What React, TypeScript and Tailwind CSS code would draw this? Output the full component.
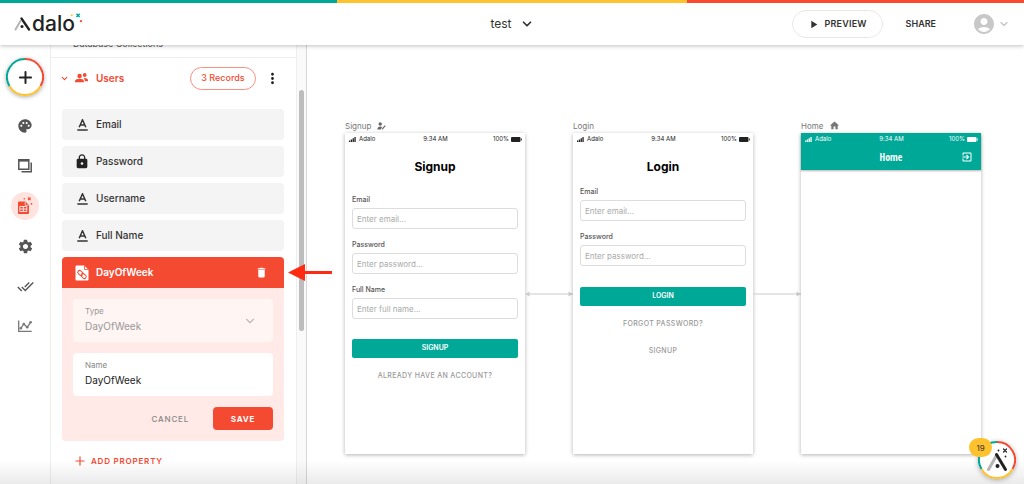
import { useState } from 'react';
import type { ReactNode } from 'react';
import { ChevronDown, Plus } from 'lucide-react';
import {
  MdAccountCircle,
  MdDelete,
  MdDoneAll,
  MdExitToApp,
  MdHome,
  MdLock,
  MdMoreVert,
  MdPalette,
  MdPlayArrow,
  MdSettings,
} from 'react-icons/md';

interface Property { name: string; icon: 'text' | 'lock' }
interface Field { id: string; label: string; placeholder: string; type: string }

const properties: Property[] = [
  { name: 'Email', icon: 'text' },
  { name: 'Password', icon: 'lock' },
  { name: 'Username', icon: 'text' },
  { name: 'Full Name', icon: 'text' },
];

const signupFields: Field[] = [
  { id: 'signup-email', label: 'Email', placeholder: 'Enter email...', type: 'email' },
  { id: 'signup-password', label: 'Password', placeholder: 'Enter password...', type: 'password' },
  { id: 'signup-name', label: 'Full Name', placeholder: 'Enter full name...', type: 'text' },
];

const loginFields: Field[] = [
  { id: 'login-email', label: 'Email', placeholder: 'Enter email...', type: 'email' },
  { id: 'login-password', label: 'Password', placeholder: 'Enter password...', type: 'password' },
];

function Logo() {
  return (
    <a href="#" aria-label="Adalo" className="relative flex w-fit items-end text-[#222]">
      <svg width="18" height="14" viewBox="0 0 18 14" fill="none" strokeLinecap="round">
        <path d="M1.5 12.500 6.500 4" stroke="#b5b5b5" strokeWidth="2" />
        <path d="M7.500 1.500 15 12.500" stroke="#222" strokeWidth="2.300" />
        <circle cx="8" cy="9.500" r="1.500" fill="#222" />
      </svg>
      <span className="text-[21px] leading-[14px] font-medium">dalo</span>
      <svg className="absolute -top-1 left-14" width="13" height="11" viewBox="0 0 13 11">
        <path d="m6.500.8 3.200 3.200m0-3.200L6.500 4" stroke="#00a898" strokeWidth="1.500" />
        <circle cx="1.800" cy="2.200" r="1" fill="#ffc22f" />
        <circle cx="11" cy="8.200" r="1.100" fill="#f44a32" />
      </svg>
    </a>
  );
}

function ColorRing({ size }: { size: number }) {
  return (
    <svg className="absolute inset-0" width={size} height={size} viewBox="0 0 38 38" fill="none" strokeWidth="2">
      <path d="M19 1A18 18 0 0 1 34.6 28" stroke="#f44a32" />
      <path d="M34.6 28A18 18 0 0 1 3.4 28" stroke="#ffc22f" />
      <path d="M3.4 28A18 18 0 0 1 19 1" stroke="#00a898" />
    </svg>
  );
}

function ScreensIcon() {
  return (
    <svg width="16" height="16" viewBox="0 0 16 16" fill="none" stroke="#555" strokeWidth="1.5">
      <path d="M1.8 1.8h10v9.4h-10z" />
      <path d="M1.8 2.6h10" strokeWidth="2" />
      <path d="M14.2 4.5v9.3H4.5" />
    </svg>
  );
}

function DatabaseIcon() {
  return (
    <svg width="18" height="20" viewBox="0 0 18 20">
      <path d="M3 5.500h6.500l3.500 3.800V17a1 1 0 0 1-1 1H3a1 1 0 0 1-1-1V6.500a1 1 0 0 1 1-1z" fill="#f44a32" />
      <path d="M3.800 10.500h7v5h-7zM3.800 13h7M7.300 10.500v5" fill="none" stroke="#ffe3df" strokeWidth="1" />
      <path d="M9.200 6v3.300h3.300" fill="none" stroke="#ffe3df" strokeWidth=".8" />
      <path d="m12 1.500 2.600 2.600m0-2.600L12 4.100" stroke="#f44a32" strokeWidth="1.100" />
      <circle cx="8.300" cy="2.800" r=".8" fill="#f44a32" />
      <circle cx="15.500" cy="7.800" r=".9" fill="#f44a32" />
    </svg>
  );
}

function AnalyticsIcon() {
  return (
    <svg width="16" height="14" viewBox="0 0 16 14" fill="none" stroke="#777" strokeWidth="1.300">
      <path d="M1.700 1.500v10.800h13" />
      <path d="m3.800 9.300 3-4.300 3.400 3.200 3.600-5" />
      <g fill="#777" stroke="none">
        <circle cx="3.800" cy="9.300" r="1.300" />
        <circle cx="6.800" cy="5" r="1.300" />
        <circle cx="10.200" cy="8.200" r="1.300" />
        <circle cx="13.600" cy="3.200" r="1.300" />
      </g>
    </svg>
  );
}

function PeopleIcon() {
  return (
    <svg className="mr-2 ml-[6px]" width="13" height="10" viewBox="0 0 13 10" fill="currentColor">
      <circle cx="4.600" cy="3" r="2.200" />
      <path d="M0 9.300V8.200c0-1.600 2.500-2.400 4.600-2.400s4.200.8 4.200 2.400v1.100z" />
      <circle cx="9.700" cy="2" r="1.900" />
      <path d="M8.600 5c2-.3 4.400.5 4.400 2v1.300H9.800c.1-1.400-.4-2.500-1.200-3.300z" />
    </svg>
  );
}

function TextIcon() {
  return (
    <svg width="11" height="12" viewBox="0 0 11 12" fill="none" stroke="#333">
      <path d="M2.200 8.300 5.500.8l3.300 7.500M3.300 6h4.400" strokeWidth="1.500" />
      <path d="M.3 11h10.400" strokeWidth="1.500" />
    </svg>
  );
}

function RelationIcon() {
  return (
    <svg width="14" height="16" viewBox="0 0 14 16">
      <path d="M1.500.5h7.700L13.500 4.800v9.700a1 1 0 0 1-1 1h-11a1 1 0 0 1-1-1v-13a1 1 0 0 1 1-1z" fill="#fff" />
      <path d="M9.500 1v3.500H13" fill="none" stroke="#f44a32" strokeWidth=".8" />
      <g fill="none" stroke="#f44a32" strokeWidth="1" transform="rotate(42 7 9.500)">
        <rect x="1.900" y="7.700" width="5.800" height="3.600" rx="1.800" />
        <rect x="6.300" y="7.700" width="5.800" height="3.600" rx="1.800" />
      </g>
    </svg>
  );
}

function Header() {
  return (
    <header className="relative z-20 shrink-0 bg-white shadow-[0_1px_4px_rgba(0,0,0,0.25)]">
      <div className="grid h-[3px] grid-cols-[337fr_350fr_337fr]">
        <div className="bg-[#00a898]" />
        <div className="bg-[#ffc22f]" />
        <div className="bg-[#f9492f]" />
      </div>
      <div className="grid h-[42px] grid-cols-3 items-center px-[14px]">
        <Logo />
        <button className="flex items-center gap-2 justify-self-center text-xs text-[#333]">
          test
          <ChevronDown size={14} strokeWidth={3} />
        </button>
        <div className="flex items-center justify-end">
          <button className="flex h-7 w-[91px] items-center justify-center gap-1 rounded-full border border-[#e8e8e8] text-[9px] font-semibold tracking-wide text-[#333]">
            <MdPlayArrow size={13} />
            PREVIEW
          </button>
          <button className="ml-[23px] text-[9px] font-semibold text-[#333]">SHARE</button>
          <button aria-label="Account" className="ml-9 flex items-center gap-[2px] text-[#c8c8c8]">
            <MdAccountCircle size={24} />
            <ChevronDown size={12} strokeWidth={3} />
          </button>
        </div>
      </div>
    </header>
  );
}

function RailButton({ label, active, children }: { label: string; active?: boolean; children: ReactNode }) {
  return (
    <button aria-label={label} className="flex size-10 items-center justify-center text-[#555]">
      <span className={active ? 'flex size-7 items-center justify-center rounded-full bg-[#ffe3df]' : 'flex size-7 items-center justify-center'}>
        {children}
      </span>
    </button>
  );
}

function Rail() {
  return (
    <nav className="flex w-[50px] shrink-0 flex-col items-center pt-[13px]">
      <button aria-label="Add" className="relative mb-[10px] flex size-[38px] items-center justify-center rounded-full bg-white text-[#222] shadow-[0_1px_4px_rgba(0,0,0,0.35)]">
        <ColorRing size={38} />
        <Plus size={19} strokeWidth={2.5} />
      </button>
      <RailButton label="Branding"><MdPalette size={16} /></RailButton>
      <RailButton label="Screens"><ScreensIcon /></RailButton>
      <RailButton label="Database" active><DatabaseIcon /></RailButton>
      <RailButton label="Settings"><MdSettings size={17} /></RailButton>
      <RailButton label="Publish"><MdDoneAll size={17} /></RailButton>
      <RailButton label="Analytics"><AnalyticsIcon /></RailButton>
    </nav>
  );
}

function PropertyEditor() {
  const [name, setName] = useState('DayOfWeek');

  return (
    <section className="overflow-hidden rounded-[4px] bg-[#ffeae7]">
      <div className="flex h-[31px] items-center bg-[#f44a32] pr-4 pl-[13px] text-white">
        <RelationIcon />
        <h3 className="ml-[7px] flex-1 text-[10px] font-semibold">DayOfWeek</h3>
        <button aria-label="Delete property"><MdDelete size={13} /></button>
      </div>
      <div className="flex flex-col gap-[11px] p-[11px]">
        <div className="relative flex h-[43px] flex-col rounded-[4px] bg-[#fff5f3] px-3 pt-[6px]">
          <label htmlFor="prop-type" className="text-[8px] leading-3 text-[#999]">Type</label>
          <select id="prop-type" disabled className="h-[18px] appearance-none bg-transparent text-[10px] text-[#999] opacity-100">
            <option>DayOfWeek</option>
          </select>
          <ChevronDown size={14} className="absolute top-[15px] right-4 text-[#bbb]" />
        </div>
        <div className="flex h-[43px] flex-col rounded-[4px] bg-white px-3 pt-[6px]">
          <label htmlFor="prop-name" className="text-[8px] leading-3 text-[#888]">Name</label>
          <input id="prop-name" value={name} onChange={(e) => setName(e.target.value)} className="h-[18px] w-full text-[10px] text-[#222] outline-none" />
        </div>
        <div className="flex justify-end gap-1 text-[8px] tracking-widest">
          <button className="h-[23px] px-5 font-medium text-[#888]">CANCEL</button>
          <button className="h-[23px] w-[60px] rounded-[4px] bg-[#f44a32] font-bold text-white">SAVE</button>
        </div>
      </div>
    </section>
  );
}

function DatabasePanel() {
  return (
    <aside className="flex w-[257px] shrink-0 overflow-hidden border-r border-[#d8d8d8]">
      <div className="min-w-0 flex-1 border-x border-[#eee]">
        <h2 className="-mt-[7px] pb-[7px] pl-[22px] text-[9px] leading-3 text-[#555]">Database Collections</h2>
        <div className="flex h-[41px] items-center border-t border-[#eee] pr-[15px] pl-[9px] text-[#f44a32]">
          <button className="flex flex-1 items-center text-[10px] font-semibold">
            <ChevronDown size={9} strokeWidth={3} />
            <PeopleIcon />
            Users
          </button>
          <button className="h-[23px] w-[66px] rounded-full border border-[#f8907f] text-[9px] font-medium">3 Records</button>
          <button aria-label="More" className="ml-2 text-[#222]"><MdMoreVert size={17} /></button>
        </div>
        <div className="mt-[11px] flex flex-col gap-[6px] pr-3 pl-[11px]">
          {properties.map((p) => (
            <button key={p.name} className="flex h-[31px] items-center rounded-[4px] bg-[#f4f4f4] pl-3 text-[10px] font-medium text-[#333]">
              <span className="mr-[6px] flex w-4 justify-center">
                {p.icon === 'lock' ? <MdLock size={17} className="text-[#222]" /> : <TextIcon />}
              </span>
              {p.name}
            </button>
          ))}
          <PropertyEditor />
        </div>
        <button className="mt-[13px] ml-[22px] flex items-center gap-1 text-[8px] font-semibold tracking-widest text-[#f44a32]">
          <Plus size={14} />
          ADD PROPERTY
        </button>
      </div>
      <div className="w-[9px] bg-[#fafafa] px-[2px] pt-[45px]">
        <div className="h-[241px] rounded-full bg-[#bdbdbd]" />
      </div>
    </aside>
  );
}

function StatusBar() {
  return (
    <div className="grid h-3 grid-cols-3 items-center pr-[3px] pl-1 text-[6px] leading-none">
      <span className="flex items-center gap-[3px]">
        <svg width="7" height="5" viewBox="0 0 7 5" fill="currentColor">
          <path d="M0 3.500h1.300V5H0zM1.800 2.500h1.300V5H1.800zM3.600 1.300h1.300V5H3.600zM5.400 0h1.300v5H5.400z" />
        </svg>
        Adalo
      </span>
      <span className="text-center">9:34 AM</span>
      <span className="flex items-center justify-end gap-[2px]">
        100%
        <svg width="11" height="5" viewBox="0 0 11 5" fill="currentColor">
          <rect width="9.500" height="5" rx="1" />
          <path d="M10 1.500h.8v2H10z" />
        </svg>
      </span>
    </div>
  );
}

function Artboard({ name, icon, children }: { name: string; icon?: ReactNode; children: ReactNode }) {
  return (
    <section className="w-[180px] shrink-0">
      <h2 className="flex h-[13px] items-center gap-[6px] pb-[2px] text-[8px] text-[#777]">{name}{icon}</h2>
      <div className="h-[321px] bg-white text-[#222] shadow-[0_1px_4px_rgba(0,0,0,0.3)]">{children}</div>
    </section>
  );
}

function FormFields({ fields }: { fields: Field[] }) {
  return (
    <div className="flex flex-col gap-[10px]">
      {fields.map((f) => (
        <div key={f.id} className="flex flex-col gap-[2px]">
          <label htmlFor={f.id} className="text-[7px] leading-3 font-medium text-[#555]">{f.label}</label>
          <input id={f.id} type={f.type} placeholder={f.placeholder} className="h-[21px] w-full rounded-[3px] border border-[#ddd] px-1 text-[8px] outline-none placeholder:text-[#aaa]" />
        </div>
      ))}
    </div>
  );
}

function Connector({ both }: { both?: boolean }) {
  return (
    <svg className="mt-[171px] w-12 shrink-0" height="6" viewBox="0 0 48 6" fill="#ccc">
      <path d="M0 2.500h48v1H0z" />
      <path d="m43.500.5 4 2.500-4 2.500z" />
      {both && <path d="m4.500.5-4 2.500 4 2.500z" />}
    </svg>
  );
}

function Canvas() {
  return (
    <main className="flex min-w-0 flex-1 items-start overflow-hidden pt-[75px] pl-[38px]">
      <Artboard
        name="Signup"
        icon={
          <svg width="9" height="8" viewBox="0 0 9 8" fill="#666">
            <circle cx="3.200" cy="2" r="1.700" />
            <path d="M.300 7.500c0-2 1.500-3 3-3 .8 0 1.300.2 1.800.5L3.800 7.500zM5 6.600l2.800-3.400.9.800L5.900 7.200l-1.100.3z" />
          </svg>
        }
      >
        <StatusBar />
        <div className="px-[7px] pt-3">
          <h3 className="mb-[17px] text-center text-xs leading-5 font-bold text-black">Signup</h3>
          <FormFields fields={signupFields} />
          <button className="mt-5 h-[19px] w-full rounded-[2px] bg-[#00a898] text-[7px] font-semibold text-white">SIGNUP</button>
          <a href="#" className="mt-3 block text-center text-[7px] leading-3 font-medium tracking-wider text-[#999]">ALREADY HAVE AN ACCOUNT?</a>
        </div>
      </Artboard>
      <Connector both />
      <Artboard name="Login">
        <StatusBar />
        <div className="px-[7px] pt-3">
          <h3 className="mb-[9px] text-center text-xs leading-5 font-bold text-black">Login</h3>
          <FormFields fields={loginFields} />
          <button className="mt-[21px] h-[19px] w-full rounded-[2px] bg-[#00a898] text-[7px] font-semibold text-white">LOGIN</button>
          <a href="#" className="mt-3 block text-center text-[7px] leading-3 font-medium tracking-wider text-[#999]">FORGOT PASSWORD?</a>
          <a href="#" className="mt-[15px] block text-center text-[7px] leading-3 font-medium tracking-wider text-[#999]">SIGNUP</a>
        </div>
      </Artboard>
      <Connector />
      <Artboard name="Home" icon={<MdHome size={11} />}>
        <div className="h-[37px] bg-[#00a898] text-white shadow-[0_1px_2px_rgba(0,0,0,0.3)]">
          <StatusBar />
          <div className="grid h-6 grid-cols-3 items-center px-2">
            <h3 className="col-start-2 text-center font-['Liberation_Sans_Narrow','Open_Sans_Condensed','Roboto',sans-serif] text-[10px] font-bold">Home</h3>
            <button aria-label="Log out" className="justify-self-end"><MdExitToApp size={12} /></button>
          </div>
        </div>
      </Artboard>
    </main>
  );
}

function HelpButton() {
  return (
    <button aria-label="Help" className="absolute right-2 bottom-[5px] z-20 size-[38px] rounded-full bg-white shadow-[0_1px_5px_rgba(0,0,0,0.3)]">
      <ColorRing size={38} />
      <svg className="absolute inset-0" width="38" height="38" viewBox="0 0 38 38" fill="none" strokeLinecap="round">
        <path d="m10.500 28.500 8-14" stroke="#b5b5b5" strokeWidth="3" />
        <path d="m18.500 13.500 9 15" stroke="#222" strokeWidth="3" />
        <circle cx="19.500" cy="25" r="2" fill="#222" />
        <path d="m25.500 8 3 3m0-3-3 3" stroke="#222" strokeWidth="1.200" />
        <circle cx="20.500" cy="9.500" r=".9" fill="#222" />
        <circle cx="27.500" cy="15.500" r=".9" fill="#222" />
      </svg>
      <span className="absolute -top-[3px] -left-[9px] flex h-[19px] w-[23px] items-center justify-center rounded-full bg-[#ffc22f] text-[8px] text-[#333]">19</span>
    </button>
  );
}

export default function App() {
  return (
    <div className="relative flex h-screen flex-col overflow-hidden bg-white font-['Inter',sans-serif]">
      <Header />
      <div className="flex min-h-0 flex-1">
        <Rail />
        <DatabasePanel />
        <Canvas />
      </div>
      <svg className="absolute top-[264px] left-[288px] z-10" width="44" height="17" viewBox="0 0 44 17" fill="#ff2a12">
        <path d="M0 8.500 17 0v7h27v3H17v7z" />
      </svg>
      <div className="pointer-events-none absolute inset-x-0 bottom-0 z-10 h-6 bg-linear-to-b from-transparent to-black/8" />
      <HelpButton />
    </div>
  );
}
